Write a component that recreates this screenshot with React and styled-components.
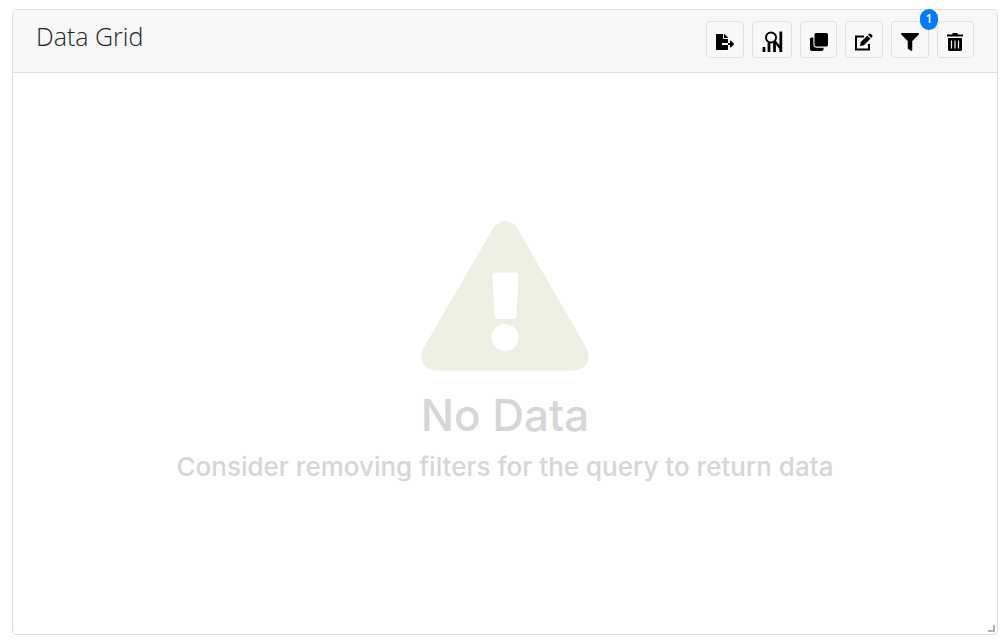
import React from "react";
import styled, { createGlobalStyle } from "styled-components";
import { FaFileExport, FaClone, FaFilter } from "react-icons/fa";

const GlobalStyle = createGlobalStyle`
  * { box-sizing: border-box; }
  body { margin: 0; background: #fff; }
`;

const Page = styled.main`
  display: flex;
  min-height: 100vh;
  padding: 9px 6px 7px 12px;
  font-family: "Open Sans", sans-serif;
`;

const Card = styled.section`
  position: relative;
  display: flex;
  flex: 1;
  flex-direction: column;
  border: 1px solid #dfdfdf;
  border-radius: 4px;
`;

const Header = styled.header`
  display: flex;
  justify-content: space-between;
  align-items: flex-start;
  padding: 11px 23px 14px;
  background: #f7f7f7;
  border-bottom: 1px solid #dfdfdf;
  border-radius: 3px 3px 0 0;
`;

const Title = styled.h1`
  margin: 0;
  font-size: 25px;
  line-height: 30px;
  font-weight: 300;
  color: #212529;
`;

const Toolbar = styled.div`
  display: flex;
  gap: 8px;
`;

const ToolButton = styled.button`
  position: relative;
  display: flex;
  align-items: center;
  justify-content: center;
  width: ${(p) => p.$width || 38}px;
  height: 37px;
  padding: 4px 0 0;
  border: 1px solid #e0e0e0;
  border-radius: 4px;
  background: #f8f8f8;
  color: #000;
  cursor: pointer;
`;

const Badge = styled.span`
  position: absolute;
  top: -13px;
  right: -10px;
  width: 18px;
  height: 21px;
  border-radius: 9px;
  background: #007bff;
  color: #fff;
  font-family: "Open Sans", sans-serif;
  font-size: 12px;
  line-height: 19px;
  font-weight: 600;
  text-align: center;
`;

const Empty = styled.div`
  display: flex;
  flex: 1;
  flex-direction: column;
  align-items: center;
  justify-content: center;
  padding-bottom: 2px;
  color: #d6d6d6;
  font-family: Inter, sans-serif;
  text-align: center;
`;

const EmptyTitle = styled.h2`
  margin: 16px 0 0;
  font-size: 44px;
  line-height: 56px;
  font-weight: 500;
`;

const EmptyText = styled.p`
  margin: 7px 0 0;
  font-size: 26px;
  line-height: 34px;
  font-weight: 500;
`;

const ResizeHandle = styled.span`
  position: absolute;
  right: 2px;
  bottom: 2px;
  width: 7px;
  height: 7px;
  border: solid #b0b0b0;
  border-width: 0 2px 2px 0;
  cursor: se-resize;
`;

const AnalyzeIcon = () => (
  <svg width="21" height="21" viewBox="0 0 21 21" fill="none" stroke="#000" aria-hidden="true">
    <circle cx="9" cy="6.500" r="5" strokeWidth="2" />
    <path d="M12.500 10L19 18" strokeWidth="2.500" />
    <path d="M2 16v5M7 11.500v9.500M12.500 11.500v9.500M18.800 0.500v20.500" strokeWidth="2.800" />
  </svg>
);

const EditIcon = () => (
  <svg width="18" height="18" viewBox="0 0 18 18" aria-hidden="true">
    <path d="M9 3.500H1v13h13V11" fill="none" stroke="#000" strokeWidth="2" />
    <path d="M5 13l.7-3.800L12.300 2.600l3.100 3.100-6.600 6.600zM13.100 1.800l1-1q.8-.6 1.600 0l1.500 1.500q.7.800 0 1.600l-1 1z" />
  </svg>
);

const TrashIcon = () => (
  <svg width="17" height="18" viewBox="0 0 17 18" aria-hidden="true">
    <path d="M0 1.500h5q0-1.500 1.200-1.500h3.600q1.200 0 1.200 1.500h5v2H0z" />
    <path d="M1 5h14v11.500q0 1.500-1.500 1.500h-11Q1 18 1 16.500z" />
    <path d="M4.500 7.500v8M8 7.500v8M11.500 7.500v8" stroke="#f8f8f8" strokeWidth="1.200" />
  </svg>
);

const WarningIcon = () => (
  <svg width="168" height="150" viewBox="0 0 168 150" aria-hidden="true">
    <path d="M72 7.500C77.500-2.500 91-2.500 96.500 7.500L165.500 127C171.500 137 165 149.500 153.500 149.500H14.500C3 149.500-3.500 137 2.500 127Z" fill="#eeeee2" />
    <path d="M74.500 51.500h20q3 0 3 3l-2 40.500q-.2 3-3 3h-16q-2.800 0-3-3l-2-40.500q0-3 3-3Z" fill="#fff" />
    <circle cx="84" cy="116.500" r="13.500" fill="#fff" />
  </svg>
);

export default function App() {
  return (
    <Page>
      <GlobalStyle />
      <Card>
        <Header>
          <Title>Data Grid</Title>
          <Toolbar>
            <ToolButton aria-label="Export"><FaFileExport size={18} /></ToolButton>
            <ToolButton aria-label="Analyze" $width={40}><AnalyzeIcon /></ToolButton>
            <ToolButton aria-label="Duplicate" $width={37}><FaClone size={18} /></ToolButton>
            <ToolButton aria-label="Edit"><EditIcon /></ToolButton>
            <ToolButton aria-label="Filters, 1 active">
              <FaFilter size={18} />
              <Badge>1</Badge>
            </ToolButton>
            <ToolButton aria-label="Delete" $width={37}><TrashIcon /></ToolButton>
          </Toolbar>
        </Header>
        <Empty>
          <WarningIcon />
          <EmptyTitle>No Data</EmptyTitle>
          <EmptyText>Consider removing filters for the query to return data</EmptyText>
        </Empty>
        <ResizeHandle />
      </Card>
    </Page>
  );
}
